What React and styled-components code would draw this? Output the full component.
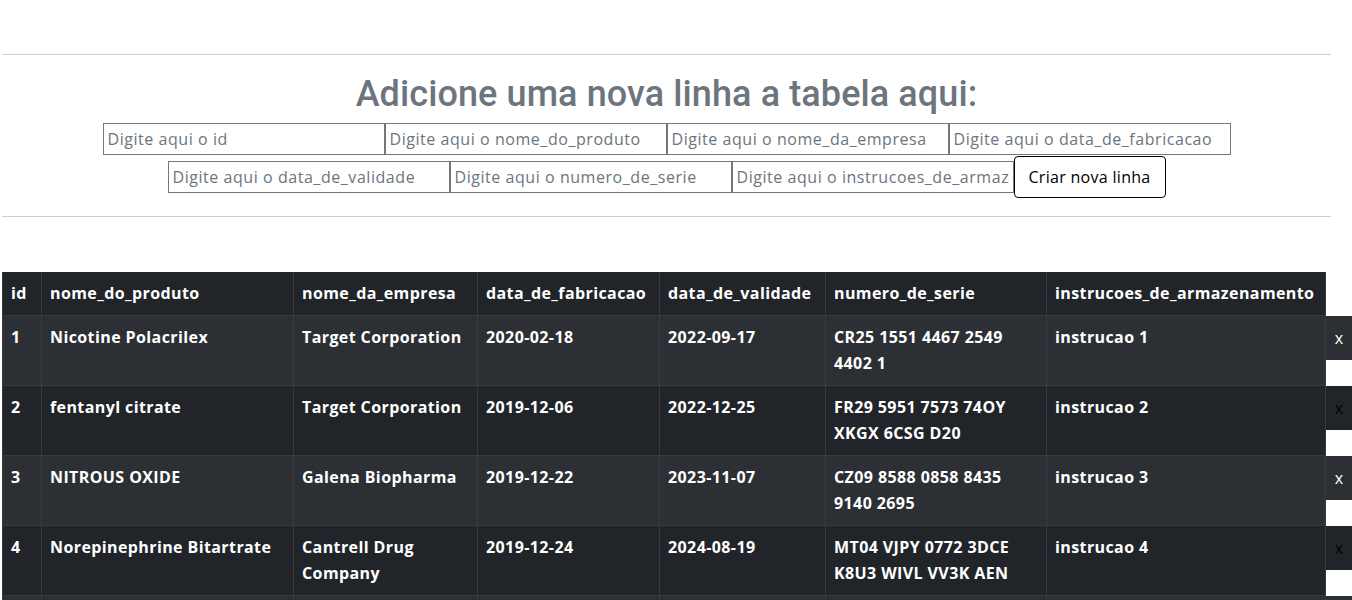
import React, { useState } from 'react';
import styled, { createGlobalStyle } from 'styled-components';

const GlobalStyle = createGlobalStyle`
  body {
    margin: 0;
    background: #ffffff;
    font-family: "Open Sans", "Noto Sans", sans-serif;
  }
`;

const Page = styled.div`
  width: 1329px;
  margin-left: 2px;
  padding-top: 54px;
`;

const Rule = styled.hr`
  margin: 0;
  border: 0;
  border-top: 1px solid #cfcfcf;
`;

const FormBlock = styled.div`
  display: flex;
  flex-direction: column;
  align-items: center;
  padding: 18px 0 18px 0;
`;

const Title = styled.h1`
  margin: 0 0 7px 0;
  font-family: Roboto, "Open Sans", sans-serif;
  font-size: 36px;
  line-height: 43px;
  font-weight: 500;
  color: #6c757d;
  letter-spacing: 0.1px;
`;

const InputRow = styled.div`
  display: flex;
  align-items: center;
  justify-content: center;
  height: ${props => props.tall ? '42px' : '32px'};
  margin-top: ${props => props.tall ? '1px' : '0'};
`;

const Field = styled.input`
  width: 282px;
  height: 32px;
  box-sizing: border-box;
  border: 1px solid #767676;
  padding: 1px 4px;
  font-family: inherit;
  font-size: 16px;
  letter-spacing: 0.55px;
  color: #212529;
  background: #ffffff;
  &::placeholder {
    color: #6c757d;
  }
`;

const CreateButton = styled.button`
  width: 152px;
  height: 42px;
  box-sizing: border-box;
  border: 1px solid #000000;
  border-radius: 4px;
  background: #ffffff;
  color: #000000;
  font-family: inherit;
  font-size: 16px;
  letter-spacing: 0.3px;
  cursor: pointer;
`;

const TableWrap = styled.div`
  margin-top: 55px;
`;

const Table = styled.table`
  table-layout: fixed;
  width: 1349px;
  border-collapse: collapse;
  color: #ffffff;
  font-size: 16px;
  font-weight: 700;
  line-height: 26px;
  letter-spacing: 0.4px;
`;

const Th = styled.th`
  background: #212529;
  text-align: left;
  padding: 8px 8px 9px 8px;
  border: 1px solid #373b3e;
  border-top: 0;
  white-space: nowrap;
  overflow: hidden;
`;

const Td = styled.td`
  background: ${props => props.odd ? '#2c3034' : '#212529'};
  padding: 8px 8px 9px 8px;
  vertical-align: top;
  border: 1px solid #373b3e;
  height: 52px;
`;

const ActionCell = styled.td`
  padding: 0;
  vertical-align: top;
  background: transparent;
`;

const RemoveButton = styled.button`
  width: 26px;
  height: 44px;
  border: 0;
  padding: 0;
  background: ${props => props.odd ? '#2c3034' : '#212529'};
  color: ${props => props.odd ? '#ffffff' : '#000000'};
  font-family: inherit;
  font-size: 16px;
  cursor: pointer;
`;

const columns = [
  { key: 'id', width: 39 },
  { key: 'nome_do_produto', width: 252 },
  { key: 'nome_da_empresa', width: 184 },
  { key: 'data_de_fabricacao', width: 182 },
  { key: 'data_de_validade', width: 166 },
  { key: 'numero_de_serie', width: 221 },
  { key: 'instrucoes_de_armazenamento', width: 279 },
];

const initialRows = [
  { id: '1', nome_do_produto: 'Nicotine Polacrilex', nome_da_empresa: 'Target Corporation', data_de_fabricacao: '2020-02-18', data_de_validade: '2022-09-17', numero_de_serie: 'CR25 1551 4467 2549 4402 1', instrucoes_de_armazenamento: 'instrucao 1' },
  { id: '2', nome_do_produto: 'fentanyl citrate', nome_da_empresa: 'Target Corporation', data_de_fabricacao: '2019-12-06', data_de_validade: '2022-12-25', numero_de_serie: 'FR29 5951 7573 74OY XKGX 6CSG D20', instrucoes_de_armazenamento: 'instrucao 2' },
  { id: '3', nome_do_produto: 'NITROUS OXIDE', nome_da_empresa: 'Galena Biopharma', data_de_fabricacao: '2019-12-22', data_de_validade: '2023-11-07', numero_de_serie: 'CZ09 8588 0858 8435 9140 2695', instrucoes_de_armazenamento: 'instrucao 3' },
  { id: '4', nome_do_produto: 'Norepinephrine Bitartrate', nome_da_empresa: 'Cantrell Drug Company', data_de_fabricacao: '2019-12-24', data_de_validade: '2024-08-19', numero_de_serie: 'MT04 VJPY 0772 3DCE K8U3 WIVL VV3K AEN', instrucoes_de_armazenamento: 'instrucao 4' },
  { id: '5', nome_do_produto: 'Ibuprofen', nome_da_empresa: 'Galena Biopharma', data_de_fabricacao: '2020-01-10', data_de_validade: '2023-05-02', numero_de_serie: 'DE44 5001 0517 5407 3249 31', instrucoes_de_armazenamento: 'instrucao 5' },
];

export default function App() {
  const [rows, setRows] = useState(initialRows);
  const [inputs, setInputs] = useState({});

  const onChange = e => {
    const { name, value } = e.target;
    setInputs({ ...inputs, [name]: value });
  };

  const onCreate = () => {
    setRows([...rows, { ...inputs }]);
    setInputs({});
  };

  const onRemove = index => {
    setRows(rows.filter((_, i) => i !== index));
  };

  const field = c => (
    <Field
      key={c.key}
      name={c.key}
      placeholder={'Digite aqui o ' + c.key}
      value={inputs[c.key] || ''}
      onChange={onChange}
    />
  );

  return (
    <React.Fragment>
      <GlobalStyle />
      <Page>
        <Rule />
        <FormBlock>
          <Title>Adicione uma nova linha a tabela aqui:</Title>
          <InputRow>{columns.slice(0, 4).map(field)}</InputRow>
          <InputRow tall>
            {columns.slice(4).map(field)}
            <CreateButton onClick={onCreate}>Criar nova linha</CreateButton>
          </InputRow>
        </FormBlock>
        <Rule />
        <TableWrap>
          <Table>
            <colgroup>
              {columns.map(c => <col key={c.key} style={{ width: c.width }} />)}
              <col style={{ width: 26 }} />
            </colgroup>
            <thead>
              <tr>
                {columns.map(c => <Th key={c.key}>{c.key}</Th>)}
              </tr>
            </thead>
            <tbody>
              {rows.map((r, i) => (
                <tr key={i}>
                  {columns.map(c => <Td key={c.key} odd={i % 2 === 0}>{r[c.key]}</Td>)}
                  <ActionCell>
                    <RemoveButton odd={i % 2 === 0} onClick={() => onRemove(i)}>x</RemoveButton>
                  </ActionCell>
                </tr>
              ))}
            </tbody>
          </Table>
        </TableWrap>
      </Page>
    </React.Fragment>
  );
}
